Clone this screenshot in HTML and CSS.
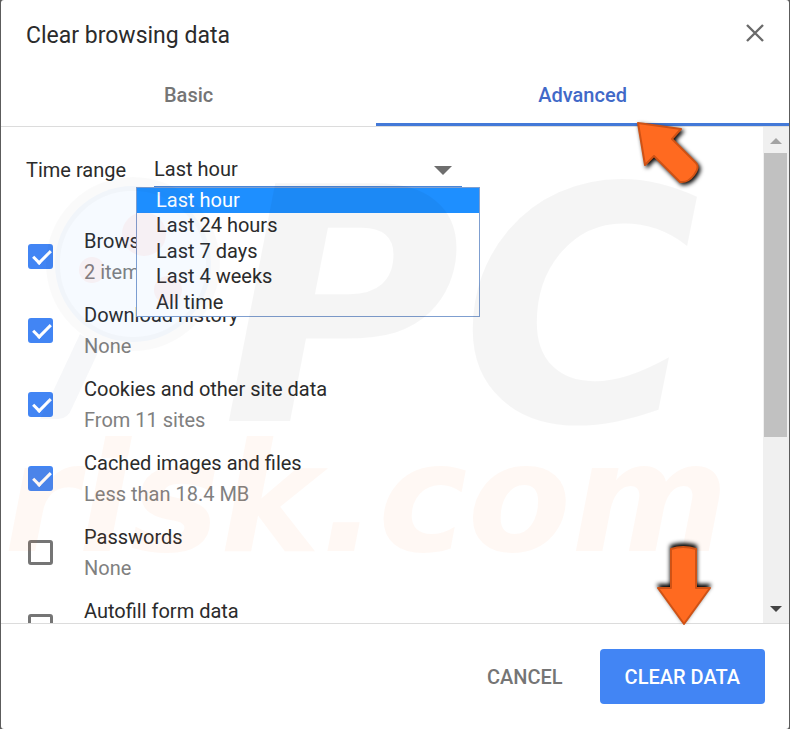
FILE: index.html
```
<!DOCTYPE html>
<html lang="en">
<head>
  <meta charset="UTF-8" />
  <meta name="viewport" content="width=device-width, initial-scale=1.0" />
  <title>Clear browsing data</title>
  <link rel="stylesheet" href="styles.css">
</head>
<body>
  <div class="dialog" role="dialog" aria-labelledby="title">
    <header class="header">
      <h1 id="title">Clear browsing data</h1>
      <button class="close" type="button" aria-label="Close">
        <svg viewBox="0 0 18 18" width="18" height="18"><path d="M1 1L17 17M17 1L1 17" stroke="#6a6a6a" stroke-width="2.4" fill="none"/></svg>
      </button>
    </header>

    <div class="tabs" role="tablist">
      <button class="tab" type="button" role="tab">Basic</button>
      <button class="tab selected" type="button" role="tab" aria-selected="true">Advanced</button>
    </div>

    <main class="body">
      <div class="content">
        <div class="time-range">
          <label for="range">Time range</label>
          <div class="dropdown">
            <select id="range">
              <option>Last hour</option>
              <option>Last 24 hours</option>
              <option>Last 7 days</option>
              <option>Last 4 weeks</option>
              <option>All time</option>
            </select>
            <ul class="menu" role="listbox" aria-label="Time range">
              <li class="active" role="option" aria-selected="true">Last hour</li>
              <li role="option">Last 24 hours</li>
              <li role="option">Last 7 days</li>
              <li role="option">Last 4 weeks</li>
              <li role="option">All time</li>
            </ul>
          </div>
        </div>

        <label class="row">
          <input type="checkbox" checked>
          <span class="text">Browsing history<small>2 items</small></span>
        </label>
        <label class="row">
          <input type="checkbox" checked>
          <span class="text">Download history<small>None</small></span>
        </label>
        <label class="row">
          <input type="checkbox" checked>
          <span class="text">Cookies and other site data<small>From 11 sites</small></span>
        </label>
        <label class="row">
          <input type="checkbox" checked>
          <span class="text">Cached images and files<small>Less than 18.4 MB</small></span>
        </label>
        <label class="row">
          <input type="checkbox">
          <span class="text">Passwords<small>None</small></span>
        </label>
        <label class="row">
          <input type="checkbox">
          <span class="text">Autofill form data</span>
        </label>
      </div>

      <div class="scrollbar">
        <span class="up"></span>
        <span class="thumb"></span>
        <span class="down"></span>
      </div>
    </main>

    <footer class="footer">
      <button class="cancel" type="button">CANCEL</button>
      <button class="clear" type="button">CLEAR DATA</button>
    </footer>
  </div>

  <!-- watermark -->
  <svg class="overlay" viewBox="0 0 790 729" aria-hidden="true">
    <circle cx="133" cy="264" r="78" fill="#1e78ff" fill-opacity=".04"/>
    <circle cx="133" cy="264" r="80" fill="none" stroke="#000" stroke-opacity=".02" stroke-width="14"/>
    <g fill="#ff3c28" fill-opacity=".05">
      <circle cx="144" cy="234" r="22"/>
      <circle cx="92" cy="270" r="13"/>
      <circle cx="168" cy="290" r="14"/>
    </g>
    <path d="M80 334L101 346L72 408Q68 419 58 419H40Z" fill="#1e3c64" fill-opacity=".04"/>
    <text class="mark-pc" x="222" y="421">PC</text>
    <text class="mark-risk" x="4" y="551">risk.com</text>
  </svg>

  <!-- pointer arrows -->
  <svg class="overlay arrows" viewBox="0 0 790 729" aria-hidden="true">
    <path class="shadow-right" d="M638 123L681 129L672 139L696 163Q700 167 694 175Q688 183 680 182L654 156L645 165Z"/>
    <path class="shadow-up" d="M671 549Q683 545 696 549V588H710L684 624L658 588H671Z"/>
  </svg>
</body>
</html>
```
FILE: styles.css
```
* {
  box-sizing: border-box;
}
body {
  margin: 0;
  background: #5c5c5c;
  font-family: Roboto, "Liberation Sans", sans-serif;
  font-size: 20px;
  color: #2b2b2b;
}
button {
  font: inherit;
  font-weight: 500;
  border: none;
  background: none;
  padding: 0;
  cursor: pointer;
}
.dialog {
  display: flex;
  flex-direction: column;
  height: 100vh;
  margin: 0 1px;
  background: #fff;
  border-radius: 3px;
  overflow: hidden;
}
.header {
  display: flex;
  justify-content: space-between;
  align-items: center;
  height: 66px;
  padding: 4px 25px 0;
}
h1 {
  margin: 0;
  font-size: 23px;
  font-weight: 400;
}
.close {
  display: flex;
  margin-bottom: 4px;
}
.tabs {
  display: grid;
  grid-template-columns: 10fr 11fr;
  height: 61px;
  border-bottom: 1px solid #dcdcdc;
}
.tab {
  padding-bottom: 3px;
  color: #757575;
}
.tab.selected {
  padding-bottom: 0;
  color: #4169c8;
  border-bottom: 3px solid #4379d8;
}

/* scrolling part */
.body {
  flex: 1;
  display: flex;
  min-height: 0;
}
.content {
  flex: 1;
  padding: 14px 25px 0;
  overflow: hidden;
}
.time-range {
  display: flex;
  align-items: center;
  height: 79px;
  padding-bottom: 22px;
}
.time-range label {
  width: 128px;
}
.dropdown {
  position: relative;
}
.dropdown::after {
  content: "";
  position: absolute;
  right: 10px;
  top: 13px;
  border: 9px solid transparent;
  border-top-color: #6e6e6e;
  border-bottom: 0;
}
select {
  appearance: none;
  width: 308px;
  height: 34px;
  padding: 0;
  border: none;
  border-bottom: 1px solid #4a86d8;
  border-radius: 0;
  background: none;
  font: inherit;
  color: inherit;
}
.menu {
  position: absolute;
  left: -18px;
  top: 100%;
  display: grid;
  width: 344px;
  height: 130px;
  margin: 0;
  padding: 0;
  list-style: none;
  background: #fff;
  border: 1px solid #7f9fd0;
}
.menu li {
  padding-left: 19px;
  line-height: 25px;
}
.menu .active {
  background: #1e8fff;
  color: #fff;
}
.row {
  display: flex;
  align-items: center;
  gap: 31px;
  height: 74px;
}
.row input {
  appearance: none;
  position: relative;
  width: 25px;
  height: 25px;
  margin: 0 0 2px 2px;
  border: 3px solid #757575;
  border-radius: 3px;
}
.row input:checked {
  border-color: #4285f4;
  background: #4285f4;
}
.row input:checked::after {
  content: "";
  position: absolute;
  left: 6px;
  top: -1px;
  width: 7px;
  height: 15px;
  border: solid #fff;
  border-width: 0 3px 3px 0;
  transform: rotate(45deg);
}
.text {
  min-height: 62px;
  line-height: 31px;
}
.text small {
  display: block;
  font-size: 20px;
  color: #808080;
}
.scrollbar {
  display: flex;
  flex-direction: column;
  align-items: center;
  width: 26px;
  padding: 11px 2px 11px 1px;
  background: #f0f0f0;
}
.up,
.down {
  border: 6px solid transparent;
}
.up {
  border-top: 0;
  border-bottom-color: #a3a3a3;
}
.down {
  margin-top: auto;
  border-bottom: 0;
  border-top-color: #444;
}
.thumb {
  width: 100%;
  height: 60%;
  margin-top: 9px;
  background: #c1c1c1;
}
.footer {
  display: flex;
  justify-content: flex-end;
  align-items: center;
  gap: 37px;
  height: 106px;
  padding-right: 24px;
  border-top: 1px solid #dcdcdc;
}
.cancel {
  color: #757575;
}
.clear {
  height: 55px;
  padding: 0 25px;
  border-radius: 4px;
  background: #4285f4;
  color: #fff;
}

.overlay {
  position: absolute;
  left: 0;
  top: 0;
  width: 100%;
  pointer-events: none;
}
.overlay text {
  font-family: "DejaVu Sans", sans-serif;
  font-weight: 700;
  font-style: italic;
}
.mark-pc {
  font-size: 326px;
  fill: rgba(0, 0, 0, 0.04);
}
.mark-risk {
  font-size: 151px;
  fill: rgba(255, 110, 40, 0.05);
}
.arrows path {
  fill: #ff6a20;
  stroke: #cf5215;
  stroke-width: 2;
  stroke-linejoin: round;
}
.shadow-right {
  filter: drop-shadow(2px 2px 2px #000);
}
.shadow-up {
  filter: drop-shadow(0 -3px 2px #000);
}
```
